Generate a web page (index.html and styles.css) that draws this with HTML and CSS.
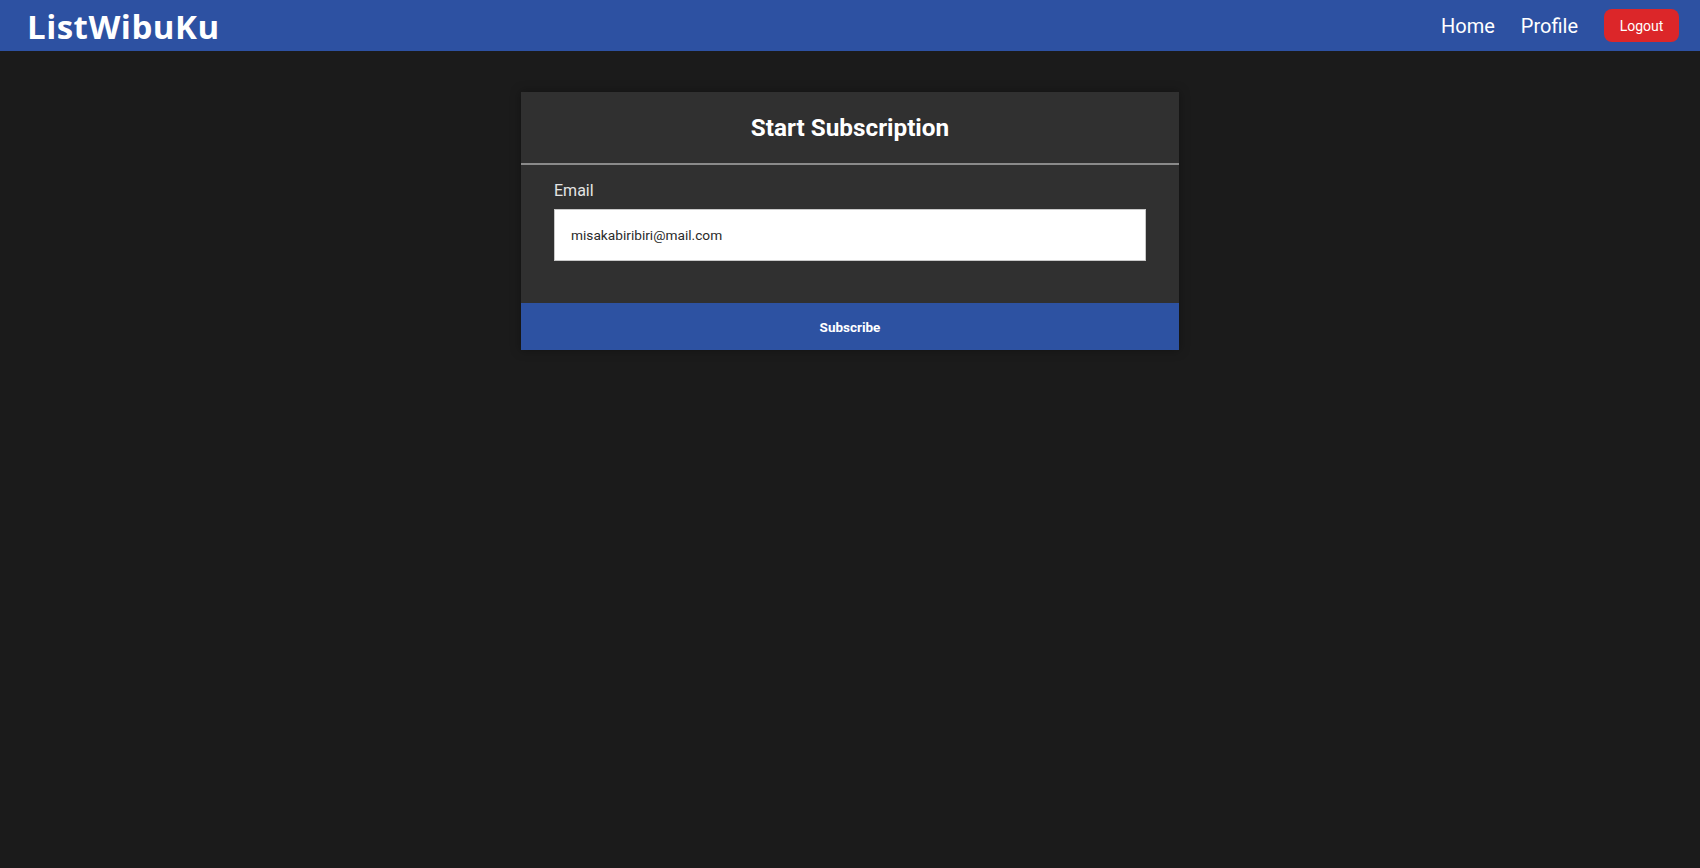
FILE: index.html
```html
<!DOCTYPE html>
<html lang="en">
<head>
<meta charset="utf-8">
<title>ListWibuKu - Subscription</title>
<link rel="stylesheet" href="styles.css">
</head>
<body>
<nav class="navbar">
  <a class="brand" href="#">ListWibuKu</a>
  <div class="nav-links">
    <a class="nav-link" href="#">Home</a>
    <a class="nav-link" href="#">Profile</a>
    <button class="logout" type="button">Logout</button>
  </div>
</nav>
<main class="main">
  <form class="card">
    <div class="card-header">
      <h1 class="card-title">Start Subscription</h1>
    </div>
    <div class="card-body">
      <label class="label" for="email">Email</label>
      <input class="input" id="email" type="email" value="misakabiribiri@mail.com">
    </div>
    <button class="submit" type="button">Subscribe</button>
  </form>
</main>
</body>
</html>
```
FILE: styles.css
```css
* { box-sizing: border-box; }
html, body { margin: 0; padding: 0; }
body {
  background: #1b1b1b;
  font-family: Roboto, "Liberation Sans", sans-serif;
  color: #fff;
  min-height: 868px;
}
.navbar {
  height: 51px;
  background: #2d51a2;
  display: flex;
  align-items: center;
  justify-content: space-between;
  padding: 0 21px 0 27px;
}
.brand {
  font-family: "Open Sans", sans-serif;
  font-weight: 700;
  font-size: 33px;
  color: #fff;
  text-decoration: none;
  letter-spacing: 0.5px;
  line-height: 1;
  margin-top: 2px;
}
.nav-links {
  display: flex;
  align-items: center;
  gap: 26px;
}
.nav-link {
  color: #fff;
  text-decoration: none;
  font-size: 20px;
}
.logout {
  width: 75px;
  height: 33px;
  border: none;
  border-radius: 8px;
  background: #dc2629;
  color: #fff;
  font-family: Roboto, sans-serif;
  font-size: 14px;
  font-weight: 400;
  padding: 0;
}
.main {
  display: flex;
  justify-content: center;
  padding-top: 41px;
}
.card {
  width: 658px;
  background: #303030;
  box-shadow: 0 0 10px rgba(0, 0, 0, 0.35);
  display: flex;
  flex-direction: column;
}
.card-header {
  height: 73px;
  border-bottom: 2px solid #8a8a8a;
  display: flex;
  align-items: center;
  justify-content: center;
}
.card-title {
  margin: 0;
  font-size: 24.3px;
  font-weight: 700;
  color: #fff;
}
.card-body {
  padding: 14px 33px 42px;
  display: flex;
  flex-direction: column;
}
.label {
  font-size: 16px;
  color: #e4e4e4;
  line-height: 24px;
  margin-bottom: 6px;
}
.input {
  height: 52px;
  border: 1px solid #c8c8c8;
  background: #fff;
  padding: 0 16px;
  font-family: Roboto, sans-serif;
  font-size: 13.7px;
  color: #2a2a2a;
  outline: none;
}
.submit {
  height: 47px;
  border: none;
  background: #2d52a2;
  color: #fff;
  font-family: Roboto, sans-serif;
  font-size: 13.5px;
  font-weight: 700;
}
```
